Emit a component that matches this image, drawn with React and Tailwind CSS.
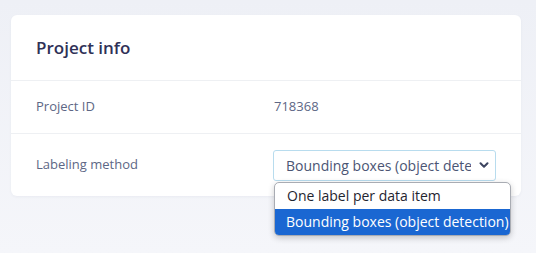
import { ChevronDown } from "lucide-react";

export default function App() {
  return (
    <div className="w-[536px] h-[253px] bg-gradient-to-b from-[#eef0f6] to-[#f5f6fa] pt-[15px] pl-[11px] font-['Open_Sans',sans-serif]">
      <div className="w-[510px] bg-white rounded-md shadow-[0_1px_3px_rgba(40,50,90,0.05)]">
        {/* header */}
        <div className="h-[66px] flex items-center px-[25px] border-b border-[#eef0f3]">
          <h2 className="text-[17px] font-semibold text-[#2f3157]">Project info</h2>
        </div>

        {/* rows */}
        <div className="h-[53px] flex items-center px-[25px] border-b border-[#eef0f3] text-[13px] text-[#5d6785]">
          <div className="w-[238px]">Project ID</div>
          <div>718368</div>
        </div>

        <div className="h-[62px] flex items-center px-[25px] text-[13px] text-[#5d6785]">
          <div className="w-[238px]">Labeling method</div>
          <div className="relative">
            <div className="w-[223px] h-[31px] flex items-center justify-between pl-[12px] pr-[4px] border border-[#b8dcee] rounded-[3px] text-[14px] text-[#4b5574] overflow-hidden whitespace-nowrap">
              <span className="overflow-hidden">Bounding boxes (object dete</span>
              <ChevronDown size={14} strokeWidth={3.5} className="shrink-0 text-[#3d4560] ml-[6px]" />
            </div>
            {/* native dropdown list */}
            <div className="absolute left-[1px] top-[32px] w-[237px] bg-white border border-[#a9acb3] rounded-[5px] shadow-[0_2px_6px_rgba(0,0,0,0.2)] overflow-hidden text-[14px] whitespace-nowrap">
              <div className="h-[26px] flex items-center pl-[12px] text-[#1f2530]">One label per data item</div>
              <div className="h-[26px] flex items-center pl-[11px] bg-[#1a67d2] text-white">Bounding boxes (object detection)</div>
            </div>
          </div>
        </div>
      </div>
    </div>
  );
}
